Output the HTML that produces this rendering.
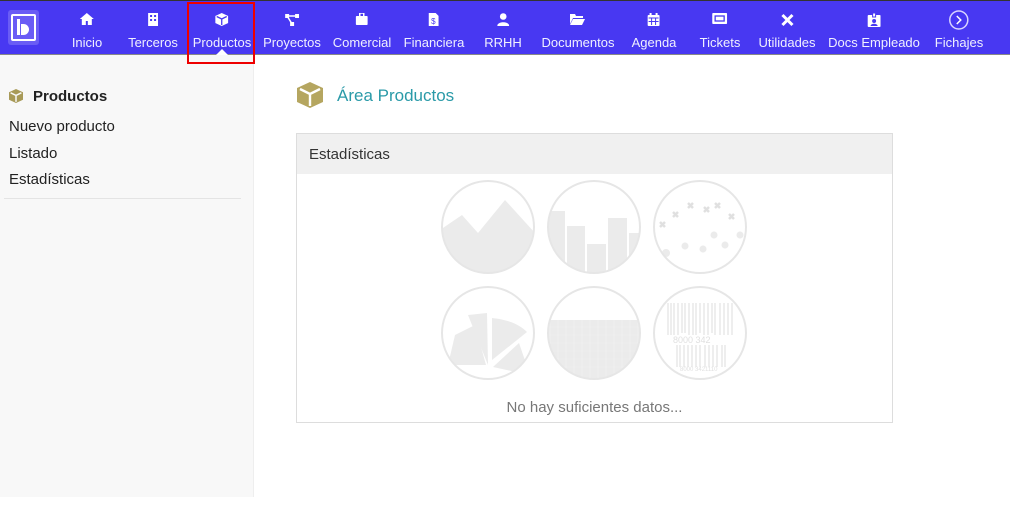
<!DOCTYPE html>
<html><head><meta charset="utf-8"><style>
*{margin:0;padding:0;box-sizing:border-box}
body{width:1010px;height:510px;overflow:hidden;background:#fff;font-family:"Liberation Sans",sans-serif;position:relative}
.top{position:absolute;left:0;top:0;width:1010px;height:55px;background:#4838f2;border-top:1px solid #333;border-bottom:1px solid #888}
.it{position:absolute;top:0;height:54px;text-align:center;color:#f0f0ff;font-size:13px;transform:translateX(-50%);white-space:nowrap}
.it svg{position:absolute;left:50%;top:12px;transform:translateX(-50%)}
.it span{display:block;margin-top:34px}
.side{position:absolute;left:0;top:55px;width:254px;height:442px;background:#f8f8f8;border-right:1px solid #eee}
.side div{position:absolute;left:9px;font-size:15px;color:#222}
</style></head><body>
<div class="top">
<div style="position:absolute;left:8px;top:9px;width:31px;height:35px;background:#6a5cf5;border-radius:3px"></div>
<div style="position:absolute;left:11px;top:13px;width:25px;height:27px;border:2px solid #fff;border-radius:2px"></div>
<div style="position:absolute;left:17px;top:18px;width:3px;height:16px;background:#fff"></div>
<div style="position:absolute;left:21px;top:23px;width:8px;height:11px;background:#fff;border-radius:0 6px 6px 0"></div>
<div class="it" style="left:87px"><svg width="14" height="12" viewBox="0 0 14 12"><path d="M7 0L0 6h2v6h4V8h2v4h4V6h2z" fill="#fff"/></svg><span>Inicio</span></div>
<div class="it" style="left:153px"><svg width="10" height="13"><rect width="10" height="13" fill="#fff"/><rect x="2" y="2" width="2" height="2" fill="#4838f2"/><rect x="6" y="2" width="2" height="2" fill="#4838f2"/><rect x="2" y="6" width="2" height="2" fill="#4838f2"/><rect x="6" y="6" width="2" height="2" fill="#4838f2"/></svg><span>Terceros</span></div>
<div class="it" style="left:222px"><svg width="13" height="13" viewBox="0 0 13 13"><path d="M6.5 0L13 3v7l-6.5 3L0 10V3z" fill="#fff"/><path d="M1.5 3.5l5 2.5 5-2.5M6.5 6v6" stroke="#4838f2" stroke-width="1.3" fill="none"/></svg><span>Productos</span></div>
<div class="it" style="left:292px"><svg width="14" height="13"><rect x="0" y="1" width="4" height="4" fill="#fff"/><rect x="10" y="1" width="4" height="4" fill="#fff"/><rect x="5" y="9" width="4" height="4" fill="#fff"/><path d="M2 3h10M2 3l5 8" stroke="#fff" stroke-width="1.5"/></svg><span>Proyectos</span></div>
<div class="it" style="left:362px"><svg width="12" height="12"><rect y="3" width="12" height="9" rx="1" fill="#fff"/><rect x="4" y="0" width="4" height="4" fill="none" stroke="#fff" stroke-width="1.5"/></svg><span>Comercial</span></div>
<div class="it" style="left:434px"><svg width="10" height="13"><path d="M0 0h7l3 3v10H0z" fill="#fff"/><text x="2.5" y="11" font-size="8" fill="#4838f2" font-family="Liberation Sans">$</text></svg><span>Financiera</span></div>
<div class="it" style="left:503px"><svg width="12" height="13"><circle cx="6" cy="3.5" r="3.3" fill="#fff"/><path d="M0 13c0-5 12-5 12 0z" fill="#fff"/></svg><span>RRHH</span></div>
<div class="it" style="left:578px"><svg width="15" height="12"><path d="M0 1h5l1 2h7v2H3L0 11z M3 6h12l-3 6H0z" fill="#fff"/></svg><span>Documentos</span></div>
<div class="it" style="left:654px"><svg width="12" height="13"><rect y="2" width="12" height="11" rx="1" fill="#fff"/><rect x="2" y="0" width="2" height="3" fill="#fff"/><rect x="8" y="0" width="2" height="3" fill="#fff"/><path d="M1 5h10M4 5v7M8 5v7M1 8.5h10" stroke="#4838f2"/></svg><span>Agenda</span></div>
<div class="it" style="left:720px"><svg width="15" height="11"><rect width="15" height="11" rx="1" fill="#fff"/><rect x="3" y="3" width="9" height="5" fill="none" stroke="#4838f2" stroke-width="1.3"/></svg><span>Tickets</span></div>
<div class="it" style="left:787px"><svg width="14" height="14"><path d="M2 2l10 10M12 2L2 12" stroke="#fff" stroke-width="3"/></svg><span>Utilidades</span></div>
<div class="it" style="left:874px"><svg width="13" height="14"><rect y="2" width="13" height="12" rx="1" fill="#fff"/><rect x="5" y="0" width="3" height="4" fill="#fff" stroke="#4838f2"/><circle cx="6.5" cy="8" r="2" fill="#4838f2"/><path d="M3 13c0-3 7-3 7 0z" fill="#4838f2"/></svg><span>Docs Empleado</span></div>
<div class="it" style="left:959px"><svg width="20" height="20" style="top:9px"><circle cx="10" cy="10" r="9" fill="none" stroke="#d8d4ff" stroke-width="1.5"/><path d="M8 6l4 4-4 4" stroke="#fff" stroke-width="1.5" fill="none"/></svg><span>Fichajes</span></div>
<div style="position:absolute;left:187px;top:1px;width:68px;height:62px;border:2px solid #e00;z-index:5"></div>
<div style="position:absolute;left:216px;top:48px;border-left:6px solid transparent;border-right:6px solid transparent;border-bottom:6px solid #fff"></div>
</div>
<div class="side">
<svg style="position:absolute;left:9px;top:34px" width="14" height="14" viewBox="0 0 13 13"><path d="M6.5 0L13 3v7l-6.5 3L0 10V3z" fill="#a89a58"/><path d="M1.5 3.5l5 2.5 5-2.5M6.5 6v6" stroke="#f8f8f8" stroke-width="1.4" fill="none"/></svg>
<div style="left:33px;top:33px;font-weight:bold">Productos</div>
<div style="top:63px">Nuevo producto</div>
<div style="top:90px">Listado</div>
<div style="top:116px">Estadísticas</div>
<div style="left:4px;top:143px;width:237px;height:1px;background:#e4e4e4"></div>
</div>
<svg style="position:absolute;left:297px;top:82px" width="26" height="26" viewBox="0 0 13 13"><path d="M6.5 0L13 3v7l-6.5 3L0 10V3z" fill="#b5a660"/><path d="M1.5 3.5l5 2.5 5-2.5M6.5 6v6" stroke="#fff" stroke-width="1.2" fill="none"/></svg>
<div style="position:absolute;left:337px;top:86px;font-size:17px;color:#2a9aa8">Área Productos</div>
<div style="position:absolute;left:296px;top:133px;width:597px;height:290px;border:1px solid #ddd">
<div style="height:40px;background:#f0f0f0;font-size:15px;color:#333;padding:12px 0 0 12px">Estadísticas</div>
<div style="position:absolute;left:0;top:265px;width:100%;text-align:center;font-size:15px;color:#777">No hay suficientes datos...</div>
</div>
<svg style="position:absolute;left:430px;top:175px" width="330" height="215">
<defs><clipPath id="c1"><circle cx="58" cy="52" r="46"/></clipPath><clipPath id="c2"><circle cx="164" cy="52" r="46"/></clipPath><clipPath id="c4"><circle cx="58" cy="158" r="46"/></clipPath><clipPath id="c5"><circle cx="164" cy="158" r="46"/></clipPath></defs>
<g fill="#ebebeb">
<path d="M10 55L32 40 48 58 75 25 105 58V110H10z" clip-path="url(#c1)"/>
<g clip-path="url(#c2)"><rect x="115" y="36" width="20" height="70"/><rect x="137" y="51" width="18" height="60"/><rect x="157" y="69" width="19" height="40"/><rect x="178" y="43" width="19" height="70"/><rect x="199" y="58" width="15" height="50"/></g>
<g clip-path="url(#c4)"><path d="M58 190L38 140 57 138z"/><path d="M62 185L62 143C80 145 90 150 97 157z"/><path d="M56 190L18 190 25 160 45 150z"/><path d="M63 192L89 168 100 200z"/></g>
<g clip-path="url(#c5)"><rect x="115" y="145" width="100" height="60"/></g>
<circle cx="236" cy="78" r="4"/><circle cx="255" cy="71" r="3.5"/><circle cx="273" cy="74" r="3.5"/><circle cx="284" cy="60" r="3.5"/><circle cx="295" cy="70" r="3.5"/><circle cx="310" cy="60" r="3.5"/>
</g>
<g stroke="#e0e0e0" stroke-width="2.5"><path d="M230 47l5 5M235 47l-5 5M243 37l5 5M248 37l-5 5M258 28l5 5M263 28l-5 5M274 32l5 5M279 32l-5 5M285 28l5 5M290 28l-5 5M299 39l5 5M304 39l-5 5"/></g>
<g stroke="#f2f2f2" stroke-width="0.6" clip-path="url(#c5)"><path d="M120 145v60M128 145v60M136 145v60M144 145v60M152 145v60M160 145v60M168 145v60M176 145v60M184 145v60M192 145v60M200 145v60M208 145v60M115 152h100M115 160h100M115 168h100M115 176h100M115 184h100M115 192h100"/></g>
<g stroke="#e2e2e2" stroke-width="1.2"><path d="M238 128v32M241 128v32M244 128v32M248 128v32M252 128v30M255 128v30M259 128v32M263 128v32M266 128v32M270 128v30M274 128v32M278 128v32M282 128v30M285 128v32M290 128v32M294 128v32M298 128v32M302 128v32M247 170v22M250 170v22M254 170v22M258 170v22M262 170v22M266 170v22M270 170v22M275 170v22M279 170v22M283 170v22M287 170v22M292 170v22M295 170v22"/></g>
<text x="243" y="168" font-size="9" fill="#e0e0e0" font-family="Liberation Sans">8000  342</text>
<text x="250" y="196" font-size="6" fill="#e0e0e0" font-family="Liberation Sans">8000 3421110</text>
<g fill="none" stroke="#e6e6e6" stroke-width="2"><circle cx="58" cy="52" r="46"/><circle cx="164" cy="52" r="46"/><circle cx="270" cy="52" r="46"/><circle cx="58" cy="158" r="46"/><circle cx="164" cy="158" r="46"/><circle cx="270" cy="158" r="46"/></g>
</svg>
</body></html>
